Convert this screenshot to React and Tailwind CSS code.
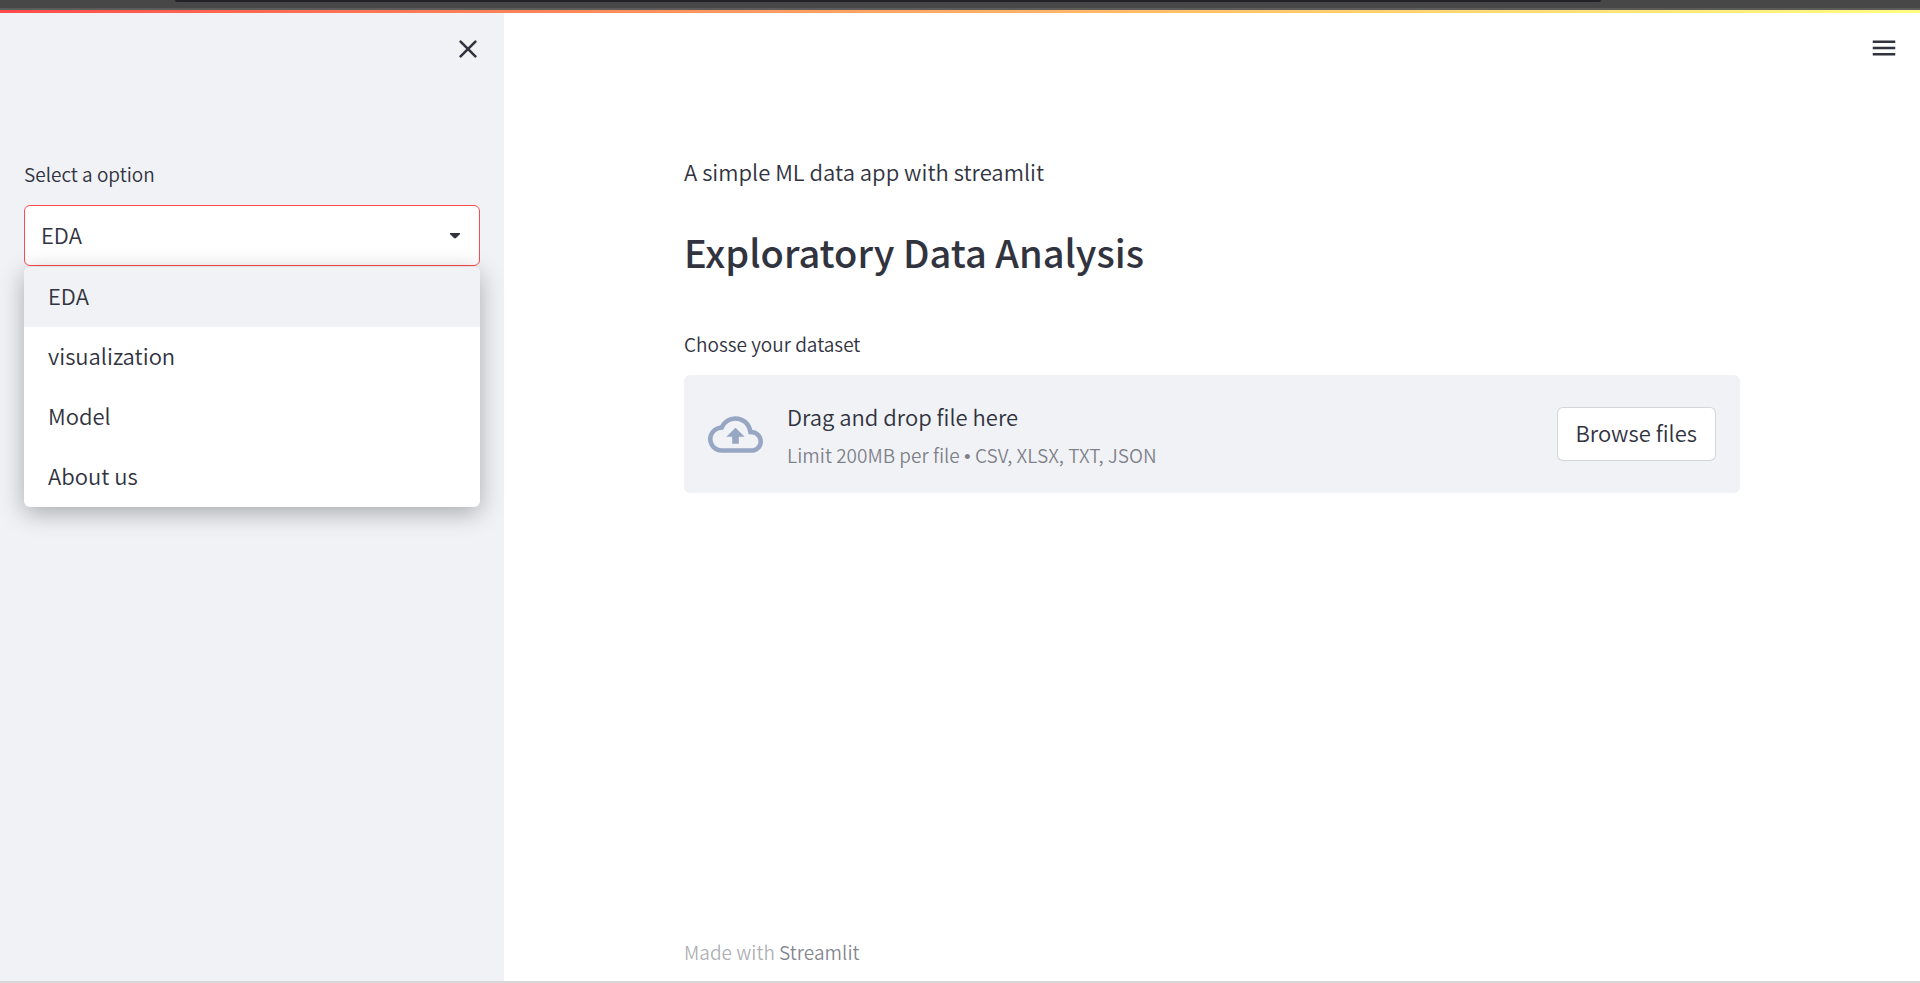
import { useRef, useState } from "react";
import { MdMenu, MdOutlineCloudUpload } from "react-icons/md";

const OPTIONS = ["EDA", "visualization", "Model", "About us"];

function BrowserEdge() {
  return (
    <div className="flex h-2.5 shrink-0 flex-col justify-between bg-[#474747]">
      <div className="mr-[319px] ml-[175px] h-0.5 rounded-b-sm bg-[#222327]" />
      <div className="h-0.5 bg-[#5b5b5b]" />
    </div>
  );
}

function CloseIcon() {
  return (
    <svg viewBox="0 0 24 24" className="size-6" fill="none" stroke="currentColor" strokeWidth="2.6" strokeLinecap="round" aria-hidden="true">
      <path d="M4.600 4.600l14.800 14.800M19.400 4.600l-14.800 14.800" />
    </svg>
  );
}

function CaretIcon() {
  return (
    <svg viewBox="0 0 12 8" className="h-2 w-3" fill="currentColor" aria-hidden="true">
      <path d="M1.6 1h8.8c.8 0 1 .7.5 1.2L7 6c-.6.6-1.400.6-2 0L1.100 2.200C.6 1.700.8 1 1.600 1z" />
    </svg>
  );
}

function OptionSelect() {
  const [value, setValue] = useState("EDA");
  const [open, setOpen] = useState(true);

  return (
    <div className="flex flex-col">
      <label htmlFor="option" className="pb-[15px] text-[19px] leading-8">
        Select a option
      </label>
      <div className="relative">
        <select
          id="option"
          value={value}
          onChange={(e) => setValue(e.target.value)}
          className="block h-[61px] w-full appearance-none rounded-md border border-[#ff4b4b] bg-white pr-12 pb-0.5 pl-4 text-[22px] outline-none"
        >
          {OPTIONS.map((o) => (
            <option key={o}>{o}</option>
          ))}
        </select>
        <span className="pointer-events-none absolute inset-y-0 right-[19px] flex items-center">
          <CaretIcon />
        </span>
        {open && (
          <ul
            role="listbox"
            aria-label="Select a option"
            className="absolute inset-x-0 top-full mt-px overflow-hidden rounded-md bg-white shadow-[0_6px_24px_rgba(0,0,0,0.3)]"
          >
            {OPTIONS.map((o) => (
              <li
                key={o}
                role="option"
                aria-selected={o === value}
                onClick={() => {
                  setValue(o);
                  setOpen(false);
                }}
                className="flex h-15 cursor-pointer items-center px-6 pb-1 text-[22px] leading-9 aria-selected:bg-[#f0f2f6]"
              >
                {o}
              </li>
            ))}
          </ul>
        )}
      </div>
    </div>
  );
}

function Uploader() {
  const input = useRef(null);
  return (
    <section aria-label="Chosse your dataset" className="flex h-[118px] items-center rounded-md bg-[#f0f2f6] px-6">
      <MdOutlineCloudUpload className="mr-6 size-[55px] text-[#97a6c3]" />
      <div className="flex flex-1 flex-col">
        <span className="text-[22px] leading-11">Drag and drop file here</span>
        <span className="text-[19px] leading-[34px] text-[#31333f]/60">
          Limit 200MB per file <span className="font-['Liberation_Sans',sans-serif]">•</span> CSV, XLSX, TXT, JSON
        </span>
      </div>
      <input id="dataset" ref={input} type="file" accept=".csv,.xlsx,.txt,.json" className="hidden" />
      <button
        type="button"
        onClick={() => input.current.click()}
        className="h-[54px] rounded-md border border-[#31333f]/20 bg-white px-[18px] pb-1 text-[22px]"
      >
        Browse files
      </button>
    </section>
  );
}

export default function App() {
  return (
    <div className="flex min-h-screen flex-col bg-white font-['Noto_Sans_CJK_SC',sans-serif] font-[350] text-[#31333f]">
      <BrowserEdge />
      <div className="h-[3px] shrink-0 bg-linear-to-r from-[#ff4b4b] to-[#fffd80]" />
      <div className="flex flex-1 border-b-2 border-[#d8d8d8]">
        <aside className="w-[504px] shrink-0 bg-[#f0f2f6] px-6 pt-6">
          <div className="mb-[97px] flex justify-end">
            <button type="button" aria-label="Close sidebar" className="flex size-6 items-center justify-center">
              <CloseIcon />
            </button>
          </div>
          <OptionSelect />
        </aside>
        <div className="flex flex-1 flex-col">
          <header className="flex h-[51px] items-start justify-end px-[21px] pt-5">
            <button type="button" aria-label="Main menu">
              <MdMenu className="size-[30px]" />
            </button>
          </header>
          <main className="mx-auto flex w-full max-w-[1104px] flex-1 flex-col px-6 pt-[87px]">
            <p className="text-[22px] leading-10">A simple ML data app with streamlit</p>
            <h2 className="pt-[31px] text-[38px] leading-[60px] font-medium">Exploratory Data Analysis</h2>
            <label htmlFor="dataset" className="pt-[46px] pb-[15px] text-[19px] leading-8">
              Chosse your dataset
            </label>
            <Uploader />
          </main>
          <footer className="mx-auto w-full max-w-[1104px] px-6 pb-[13px] text-[19px] leading-8 text-[#31333f]/40">
            Made with{" "}
            <a href="#streamlit" className="text-[#31333f]/60">
              Streamlit
            </a>
          </footer>
        </div>
      </div>
    </div>
  );
}
